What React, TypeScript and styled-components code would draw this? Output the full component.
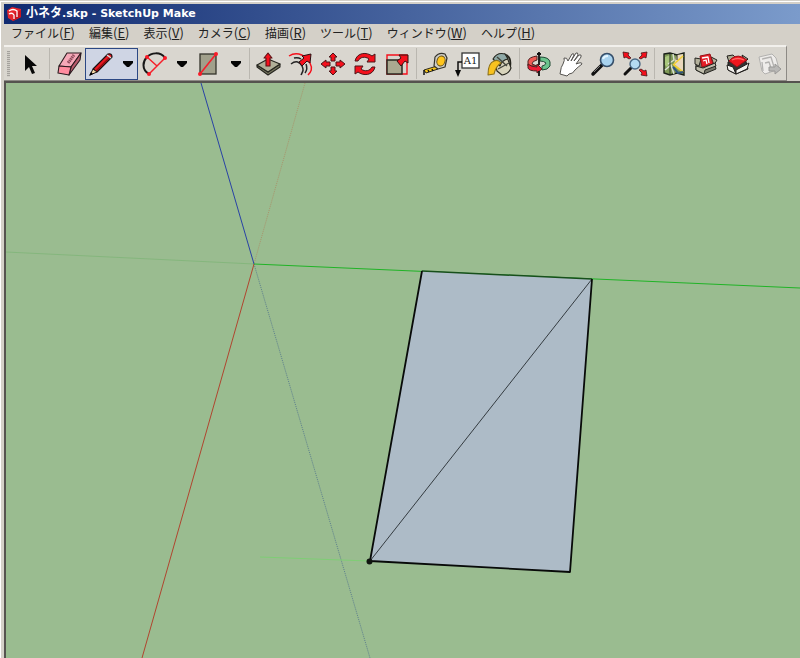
import React from "react";
import styled, { createGlobalStyle } from "styled-components";

const GlobalStyle = createGlobalStyle`
  *, *::before, *::after { box-sizing: border-box; }
  html, body { margin: 0; background: #d4d0c8; }
`;

const Window = styled.div`
  min-height: 100vh;
  display: flex;
  flex-direction: column;
  background: #d4d0c8;
  border-top: 1px solid #d4d0c8;
  padding: 3px 0 0 4px;
  box-shadow: inset 1px 1px 0 #fff;
  color: #222;
  font-family: "Noto Sans CJK JP", "Noto Sans", sans-serif;
`;

const TitleBar = styled.header`
  display: flex;
  align-items: center;
  gap: 5px;
  height: 20px;
  padding-left: 3px;
  background: linear-gradient(90deg, #102a70, #7b9bcb);
`;

const Title = styled.h1`
  margin: 0;
  color: #fff;
  font: bold 11px/20px "DejaVu Sans", sans-serif;
  white-space: nowrap;
`;

const TitleKana = styled.span`
  font-family: "Noto Sans CJK JP", sans-serif;
  font-size: 12px;
  line-height: 1;
`;

const MenuBar = styled.nav`
  display: flex;
  align-items: flex-start;
  gap: 14px;
  height: 21px;
  padding-left: 7px;
`;

const MenuButton = styled.button`
  border: 0;
  padding: 0;
  background: none;
  color: inherit;
  font: 12px/18px "Noto Sans CJK JP", sans-serif;
  white-space: nowrap;
`;

const Mnemonic = styled.span`
  font-size: 13px;
`;

const ToolBar = styled.div`
  display: flex;
  align-items: center;
  align-self: flex-start;
  height: 36px;
  padding-left: 3px;
  background: #d9d6cf;
  border: solid;
  border-width: 2px 1px 1px 0;
  border-color: #f2f0ec #8d8a85 #8d8a85;
`;

const Grip = styled.span`
  width: 3px;
  height: 26px;
  margin-right: 4px;
  background: repeating-linear-gradient(#a5a29d 0 1px, #d0cdc6 1px 2px);
`;

const Divider = styled.span`
  width: 1px;
  height: 31px;
  margin: 0 3px;
  background: #bab7b0;
`;

const ToolButton = styled.button`
  display: grid;
  place-items: center;
  width: 32px;
  height: 32px;
  border: 0;
  padding: 0;
  background: none;
`;

const SplitGroup = styled.div`
  display: flex;
  gap: 1px;
`;

const Split = styled.div<{ $active?: boolean }>`
  display: flex;
  width: 53px;
  height: 32px;
  background: ${(p) => (p.$active ? "#cfd5e4" : "none")};
  box-shadow: ${(p) => (p.$active ? "inset 0 0 0 1px #2c4884" : "none")};
`;

const ArrowButton = styled.button`
  display: grid;
  place-items: center;
  flex: 1;
  border: 0;
  padding: 0;
  background: none;
`;

const Viewport = styled.main`
  flex: 1;
  display: flex;
  border: solid #55534f;
  border-width: 2px 0 0 2px;
  background: #9abc90;
`;

const Scene = styled.svg`
  flex: 1;
  display: block;
  width: 100%;
  min-height: 0;
`;

const Glyph = ({ children }: { children: React.ReactNode }) => (
  <svg width="30" height="30" viewBox="0 0 30 30" fill="none" aria-hidden="true">
    {children}
  </svg>
);

const RED = "#f5101c";

const DropArrow = () => (
  <svg width="12" height="8" viewBox="0 0 12 8" aria-hidden="true">
    <path d="M1 1H11V3L7 7H5L1 3Z" fill="#050505" />
  </svg>
);

const Logo = () => (
  <svg width="14" height="16" viewBox="0 0 14 16" aria-hidden="true">
    <path d="M0 4.500L5 1L14 3V11L6 15L1 12Z" fill="#e5252c" />
    <path d="M6 15V8L14 4V11Z" fill="#c8141f" />
    <path d="M2 5Q6 2 10 5V11M2 8Q5 6 7 9V13" fill="none" stroke="#fff" strokeWidth="1.300" />
  </svg>
);

const icons = {
  select: <path d="M10 6V22L14 18L17 25L20 24L17 17H22Z" fill="#080808" />,
  eraser: (
    <g stroke="#2a1a1e" strokeWidth="1.100" strokeLinejoin="round">
      <path d="M13 4L27 4L17 18L5 17Z" fill="#f6a9b8" />
      <path d="M27 4L26 11L15 26L17 18Z" fill="#b95c6c" />
      <path d="M5 17L17 18L15 26L4 24Z" fill="#ff8c9f" />
      <path d="M20 6L14 14" stroke="#8e4a5a" strokeWidth="3" strokeDasharray="1.500 .6" />
    </g>
  ),
  pencil: (
    <g strokeLinejoin="round">
      <path d="M7 20L22 5Q26 4 26 8L11 23Z" fill="#ea1820" stroke="#171010" strokeWidth="1.200" />
      <path d="M4 26L7 20L11 23Z" fill="#f3d6a5" stroke="#171010" />
      <path d="M3 27L5 23L7 25Z" fill="#000" />
      <path d="M10 22L24 8" stroke="#8f0b10" strokeWidth="1.300" />
      <path d="M21 6L25 9" stroke="#ddd" strokeWidth="1.400" />
    </g>
  ),
  arc: (
    <>
      <path d="M9 25C1 20 3 12 7 8S20 2 25 9" stroke="#181818" strokeWidth="2" />
      <path d="M7 8L17 17M9 25L25 9" stroke="#f61f2b" strokeWidth="1.500" />
      <g fill="#fb1b28"><circle cx="7" cy="8" r="2" /><circle cx="25" cy="9" r="2" /><circle cx="9" cy="25" r="2" /></g>
    </>
  ),
  rect: (
    <>
      <rect x="6" y="5" width="16" height="20" fill="#a1a08b" stroke="#34332c" strokeWidth="1.300" />
      <path d="M6 25L22 5" stroke="#f61f2b" strokeWidth="1.600" />
      <circle cx="6" cy="25" r="2" fill="#fb1b28" /><circle cx="22" cy="5" r="2" fill="#fb1b28" />
    </>
  ),
  push: (
    <g stroke="#25251f" strokeWidth="1.100" strokeLinejoin="round">
      <path d="M3 16V18L14 26L26 18V15L14 23Z" fill="#77765f" />
      <path d="M3 16L14 10L26 15L14 23Z" fill="#b0af98" />
      <path d="M14 4L18 9H16V17H12V9H10Z" fill={RED} stroke="#5c1114" />
    </g>
  ),
  follow: (
    <>
      <path d="M3 7C12 1 21 8 24 14S25 23 22 26" stroke={RED} strokeWidth="1.500" />
      <path d="M5 15C10 11 14 13 16 17S17 22 15 26M8 9Q12 8 15 10M20 15Q22 20 19 24" stroke="#242424" strokeWidth="1.500" />
      <path d="M13 13L18 9L16 7L25 5L24 14L21 12L16 17Z" fill={RED} stroke="#271012" />
    </>
  ),
  move: (
    <g fill={RED} stroke="#4a1619" strokeLinejoin="round">
      <path d="M15 4L19 8H17V12H13V8H11Z" /><path d="M15 26L19 22H17V18H13V22H11Z" />
      <path d="M3 15L8 11V13H12V17H8V19Z" /><path d="M27 15L22 11V13H18V17H22V19Z" />
    </g>
  ),
  rotate: (
    <g fill={RED} stroke="#4a1619" strokeLinejoin="round">
      <path d="M5 12C7 3 17 3 22 7L25 5V13H17L19 10C15 7 10 8 8 12Z" />
      <path d="M25 18C23 27 13 27 8 23L5 25V17H13L11 20C15 23 20 22 22 18Z" />
    </g>
  ),
  scale: (
    <>
      <path d="M5 6H25V25H5Z" stroke={RED} strokeWidth="1.400" />
      <rect x="5" y="11" width="15" height="14" fill="#aaa990" stroke="#292921" strokeWidth="1.500" />
      <path d="M15 12L19 9L17 6H26V14L23 12L19 17Z" fill={RED} stroke="#35100f" />
    </>
  ),
  tape: (
    <g strokeLinejoin="round">
      <path d="M3 21L16 17L17 20L5 24Z" fill="#f7c519" stroke="#2b291d" />
      <path d="M3 21V26M7 21L8 23M11 20L12 22" stroke="#151515" strokeWidth="1.500" />
      <path d="M14 8Q18 3 24 5L26 9L24 18L17 20L13 17Z" fill="#d0cfc8" stroke="#33322b" strokeWidth="1.200" />
      <ellipse cx="20" cy="12" rx="4" ry="5" transform="rotate(20 20 12)" fill="#ffc51d" stroke="#665016" />
    </g>
  ),
  label: (
    <>
      <rect x="9" y="4" width="17" height="15" fill="#fff" stroke="#333" strokeWidth="1.300" />
      <path d="M9 13H5V23" stroke="#111" strokeWidth="1.500" /><path d="M2 21H8L5 28Z" fill="#080808" />
      <text x="17.500" y="15" textAnchor="middle" fontFamily="DejaVu Serif, serif" fontSize="10" fill="#222">A1</text>
    </>
  ),
  paint: (
    <g stroke="#25251d" strokeWidth="1.100" strokeLinejoin="round">
      <path d="M19 5Q27 7 25 18" strokeWidth="1.800" />
      <path d="M10 14L22 8L26 19Q24 25 17 26L12 22Z" fill="#d8d4bc" />
      <path d="M8 10Q12 3 20 5L23 10Q17 11 15 17L11 13Z" fill="#8fa9a7" />
      <path d="M12 8L22 17M13 20L24 14" stroke="#45473c" strokeWidth="1.400" />
      <path d="M3 26Q3 14 9 12Q13 10 16 14Q11 17 9 25Z" fill="#f8c21f" stroke="#8b701c" />
    </g>
  ),
  orbit: (
    <g strokeLinejoin="round">
      <path d="M4 17V12Q5 8 13 7V11Q8 12 8 15L13 17Z" fill="#ee5b54" stroke="#4d2020" />
      <path d="M16 8Q25 8 26 13V17Q24 21 18 21V17Q21 17 22 14Q20 12 16 12Z" fill="#6bc48d" stroke="#204a35" />
      <path d="M4 15Q7 18 13 18V15L18 20L13 24V22Q5 22 4 19Z" fill="#ed1c34" stroke="#4d2020" />
      <path d="M15 3V16M15 22V27M13 5H17" stroke="#111" strokeWidth="1.800" />
    </g>
  ),
  pan: (
    <path d="M4 25Q5 17 7 15Q9 11 8 9Q11 8 12 12L16 5Q18 4 18 6L15 12L20 4Q22 3 22 6L18 12L23 6Q26 5 25 8L20 15L23 14Q26 13 26 15Q22 18 19 21Q17 25 13 25L11 27Z" fill="#fff" stroke="#55534f" strokeLinejoin="round" />
  ),
  zoom: (
    <>
      <path d="M5 25L14 16" stroke="#111" strokeWidth="3.500" strokeLinecap="round" /><path d="M6 23L12 17" stroke="#777" />
      <circle cx="19" cy="11" r="6.500" fill="#a9d3ef" stroke="#354e69" strokeWidth="1.600" />
      <path d="M15 10Q16 7 20 7" stroke="#e5f6ff" strokeWidth="2" />
    </>
  ),
  extents: (
    <>
      <path d="M5 25L11 19" stroke="#111" strokeWidth="3" strokeLinecap="round" />
      <circle cx="15" cy="15" r="5" fill="#b4daf1" stroke="#4a6884" strokeWidth="1.400" />
      <g fill={RED} stroke="#461416" strokeWidth=".8" strokeLinejoin="round">
        <path d="M3 3L9 4L8 6L11 9L9 10L6 8L4 9Z" />
        <path d="M27 3L21 4L22 6L19 9L21 10L24 8L26 9Z" />
        <path d="M27 27L21 26L22 24L19 21L21 20L24 22L26 21Z" />
      </g>
    </>
  ),
  map: (
    <>
      <path d="M5 5L11 4L18 6L25 4V26L18 24L11 26L5 24Z" fill="#7f9957" stroke="#191f18" strokeWidth="1.400" />
      <path d="M18 6L24 5V23L15 15Z" fill="#e9d8bd" />
      <path d="M6 8L11 6L12 12L8 18L6 16Z" fill="#a9c77d" />
      <path d="M6 21L12 16L15 25M14 5L15 11L9 15" stroke="#dce2d5" strokeWidth="1.500" />
      <path d="M15 16L24 23M14 16L24 7" stroke="#f2ce32" strokeWidth="1.600" />
      <path d="M14 18L19 24L24 23" stroke="#315680" strokeWidth="2" />
      <path d="M11 4V26M18 5V11" stroke="#252b23" />
    </>
  ),
  getModels: (
    <g stroke="#24241f" strokeLinejoin="round">
      <path d="M5 13L22 9L25 20L13 25L5 21Z" fill="#78776a" />
      <path d="M4 9L10 10L8 17L4 15ZM20 8L26 11L23 16Z" fill="#b4b19c" />
      <path d="M9 7L19 5L22 15L11 18Z" fill="#e51e27" stroke="#9b1017" />
      <path d="M11 9L17 8L18 14M12 12L15 11L16 15" stroke="#fff" strokeWidth="1.300" />
      <path d="M5 17L12 19L24 14L25 17L14 21L13 25L5 21Z" fill="#c0beac" />
    </g>
  ),
  shareModel: (
    <g stroke="#201e1c" strokeLinejoin="round">
      <path d="M5 13L22 9L25 20L13 25L5 21Z" fill="#333" />
      <path d="M4 7L10 6L13 9L6 13ZM19 6L22 8L25 10L22 13Z" fill="#aaa991" />
      <path d="M4 16L10 18L13 25L5 21ZM13 21L26 14L24 20L13 25Z" fill="#f3f1ed" />
      <path d="M6 12Q12 5 19 8L24 11L18 15L14 18L10 15Z" fill="#ef161e" stroke="#9b1017" />
      <path d="M9 11Q15 8 21 11" stroke="#ff6d68" strokeWidth="1.300" />
    </g>
  ),
  component: (
    <g stroke="#b2b1af" strokeLinejoin="round">
      <path d="M4 8L17 5L21 9L24 20L10 25L7 22Z" fill="#eeecea" />
      <path d="M7 10L16 8L19 18M10 14L14 13L16 19M8 22L7 13" strokeWidth="1.300" />
      <path d="M14 18H20V15L26 20L20 25V22H14Z" fill="#b9b8b6" stroke="#999896" />
    </g>
  ),
};

type IconName = keyof typeof icons;

const Tool = ({ icon, label }: { icon: IconName; label: string }) => (
  <ToolButton aria-label={label}>
    <Glyph>{icons[icon]}</Glyph>
  </ToolButton>
);

const SplitTool = ({ icon, label, active }: { icon: IconName; label: string; active?: boolean }) => (
  <Split $active={active}>
    <Tool icon={icon} label={label} />
    <ArrowButton aria-label={`${label} メニュー`}>
      <DropArrow />
    </ArrowButton>
  </Split>
);

const menus: [string, string][] = [
  ["ファイル", "F"], ["編集", "E"], ["表示", "V"], ["カメラ", "C"],
  ["描画", "R"], ["ツール", "T"], ["ウィンドウ", "W"], ["ヘルプ", "H"],
];

const toolGroups: [IconName, string][][] = [
  [["push", "プッシュ/プル"], ["follow", "フォローミー"], ["move", "移動"], ["rotate", "回転"], ["scale", "尺度"]],
  [["tape", "メジャー"], ["label", "テキスト"], ["paint", "ペイント"]],
  [["orbit", "オービット"], ["pan", "パン表示"], ["zoom", "ズーム"], ["extents", "全体表示"]],
  [["map", "場所を追加"], ["getModels", "モデルを取得"], ["shareModel", "モデルを共有"], ["component", "コンポーネントを共有"]],
];

export default function App() {
  return (
    <>
      <GlobalStyle />
      <Window>
        <TitleBar>
          <Logo />
          <Title><TitleKana>小ネタ</TitleKana>.skp - SketchUp Make</Title>
        </TitleBar>
        <MenuBar>
          {menus.map(([name, key]) => (
            <MenuButton key={key}>
              {name}
              <Mnemonic>(<u>{key}</u>)</Mnemonic>
            </MenuButton>
          ))}
        </MenuBar>
        <ToolBar role="toolbar">
          <Grip />
          <Tool icon="select" label="選択" />
          <Divider />
          <Tool icon="eraser" label="消しゴム" />
          <SplitGroup>
            <SplitTool icon="pencil" label="線" active />
            <SplitTool icon="arc" label="円弧" />
            <SplitTool icon="rect" label="長方形" />
          </SplitGroup>
          {toolGroups.map((group) => (
            <React.Fragment key={group[0][0]}>
              <Divider />
              {group.map(([icon, label]) => (
                <Tool key={icon} icon={icon} label={label} />
              ))}
            </React.Fragment>
          ))}
        </ToolBar>
        <Viewport>
          <Scene viewBox="6 83 794 575" preserveAspectRatio="xMinYMin slice" fill="none">
            <path d="M6 252L254 264" stroke="#85b67d" />
            <path d="M305 83L254 264" stroke="#a8946c" strokeDasharray="1 1" />
            <path d="M254 264L370 658" stroke="#5d7f8d" strokeDasharray="1 1" />
            <path d="M201 83L254 264" stroke="#2942a5" />
            <path d="M254 264L142 658" stroke="#b0452f" />
            <path d="M254 264L800 288" stroke="#20b326" />
            <path d="M260 557L369 561" stroke="#7fce75" />
            <path d="M422 271L592 279L570 572L370 561Z" fill="#adbbc7" />
            <path d="M422 271L592 279" stroke="#174f1b" strokeWidth="1.500" />
            <path d="M592 279L370 561" stroke="#343b40" />
            <path d="M592 279L570 572L370 561L422 271" stroke="#080a09" strokeWidth="1.800" strokeLinejoin="round" />
            <circle cx="369.500" cy="561.500" r="3" fill="#101510" />
          </Scene>
        </Viewport>
      </Window>
    </>
  );
}
